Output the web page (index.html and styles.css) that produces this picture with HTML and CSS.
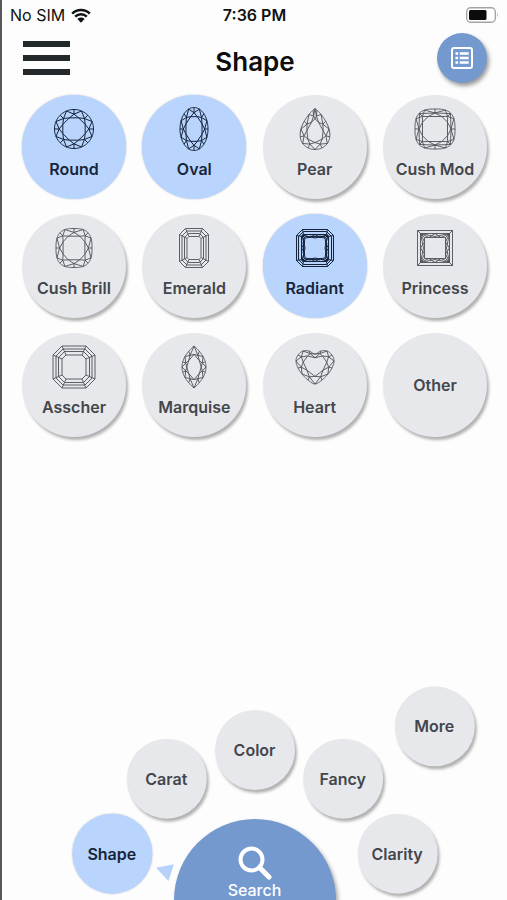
FILE: index.html
```html
<!DOCTYPE html>
<html lang="en">
<head>
<meta charset="utf-8">
<meta name="viewport" content="width=device-width, initial-scale=1">
<title>Shape</title>
<link rel="stylesheet" href="styles.css">
</head>
<body>
<div class="screen">
  <div class="status">
    <div class="status-left">
      <span>No SIM</span>
      <svg class="wifi" viewBox="0 0 20 15" aria-hidden="true">
        <path d="M1.2 5.6a12.6 12.6 0 0 1 17.6 0M4.2 8.7a8.3 8.3 0 0 1 11.6 0" fill="none" stroke="#111" stroke-width="2.5"/>
        <path d="M6.4 11.1a5.1 5.1 0 0 1 7.2 0L10 14.8z" fill="#111"/>
      </svg>
    </div>
    <span class="time">7:36 PM</span>
    <svg class="battery" viewBox="0 0 33 16" aria-hidden="true">
      <rect x=".7" y=".7" width="28.6" height="14.6" rx="4" fill="#fff" stroke="#a4a4a4" stroke-width="1.4"/>
      <rect x="3" y="3" width="17.5" height="10" rx="1.5" fill="#0c0c0c"/>
      <path d="M31 5.5q1.6 2.5 0 5z" fill="#a4a4a4"/>
    </svg>
  </div>

  <header class="header">
    <button class="burger" aria-label="Menu"><i></i><i></i><i></i></button>
    <h1 class="title">Shape</h1>
    <button class="list-button" aria-label="Results list">
      <svg viewBox="0 0 22 22" aria-hidden="true">
        <rect x="1" y="1" width="20" height="20" rx="2" fill="none" stroke="#fff" stroke-width="2"/>
        <path d="M4.5 6.5h2.6M4.5 11h2.6M4.5 15.5h2.6M8.7 6.5h9M8.7 11h9M8.7 15.5h9" stroke="#fff" stroke-width="2.4"/>
      </svg>
    </button>
  </header>

  <main class="shapes">
    <button class="shape selected" aria-pressed="true"><svg class="gem" data-cut="round"></svg><span>Round</span></button>
    <button class="shape selected" aria-pressed="true"><svg class="gem" data-cut="oval"></svg><span>Oval</span></button>
    <button class="shape" aria-pressed="false"><svg class="gem" data-cut="pear"></svg><span>Pear</span></button>
    <button class="shape" aria-pressed="false"><svg class="gem" data-cut="cushionModified"></svg><span>Cush Mod</span></button>
    <button class="shape" aria-pressed="false"><svg class="gem" data-cut="cushion"></svg><span>Cush Brill</span></button>
    <button class="shape" aria-pressed="false"><svg class="gem" data-cut="emerald"></svg><span>Emerald</span></button>
    <button class="shape selected" aria-pressed="true"><svg class="gem" data-cut="radiant"></svg><span>Radiant</span></button>
    <button class="shape" aria-pressed="false"><svg class="gem" data-cut="princess"></svg><span>Princess</span></button>
    <button class="shape" aria-pressed="false"><svg class="gem" data-cut="asscher"></svg><span>Asscher</span></button>
    <button class="shape" aria-pressed="false"><svg class="gem" data-cut="marquise"></svg><span>Marquise</span></button>
    <button class="shape" aria-pressed="false"><svg class="gem" data-cut="heart"></svg><span>Heart</span></button>
    <button class="shape plain" aria-pressed="false"><span>Other</span></button>
  </main>

  <nav class="dial" aria-label="Search criteria">
    <button class="spoke at-shape selected">Shape</button>
    <button class="spoke at-carat">Carat</button>
    <button class="spoke at-color">Color</button>
    <button class="spoke at-fancy">Fancy</button>
    <button class="spoke at-clarity">Clarity</button>
    <button class="spoke at-more">More</button>
    <svg class="pointer" viewBox="0 0 18 16" aria-hidden="true"><path d="M0 16h18L9 0z" fill="#b6d2fb"/></svg>
    <button class="search">
      <svg viewBox="0 0 34 34" aria-hidden="true">
        <circle cx="13.5" cy="13.5" r="11" fill="none" stroke="#fff" stroke-width="4"/>
        <path d="M21.5 21.5l9.5 9.5" stroke="#fff" stroke-width="5" stroke-linecap="round"/>
      </svg>
      <span>Search</span>
    </button>
  </nav>
</div>
<script src="gems.js"></script>
</body>
</html>
```
FILE: styles.css
```css
* {
  box-sizing: border-box;
}

body {
  margin: 0;
  background: #fdfdfd;
  font-family: Inter, "Liberation Sans", sans-serif;
  font-size: 16px;
  line-height: 20px;
  color: #43464b;
}

button {
  margin: 0;
  padding: 0;
  border: 0;
  background: none;
  font: inherit;
  font-weight: 600;
  color: inherit;
  cursor: pointer;
}

.screen {
  display: flex;
  flex-direction: column;
  min-height: 100vh;
  border-left: 2px solid #58585a;
}

.status,
.header {
  display: grid;
  grid-template-columns: 1fr auto 1fr;
  align-items: center;
}

.status {
  height: 30px;
  padding: 0 8px;
  color: #111;
}

.status-left {
  display: flex;
  align-items: center;
  gap: 6px;
}

.wifi {
  width: 20px;
  height: 15px;
}

.time {
  font-weight: 600;
}

.battery {
  width: 33px;
  height: 16px;
  justify-self: end;
}

.header {
  padding: 3px 20px 12px 21px;
}

.burger {
  display: flex;
  flex-direction: column;
  gap: 8px;
  width: 47px;
}

.burger i {
  height: 6px;
  background: #23282b;
}

.title {
  margin: 0;
  padding-top: 8px;
  font-size: 26px;
  line-height: 32px;
  font-weight: 600;
  color: #0d0d0d;
}

.list-button {
  display: grid;
  place-items: center;
  justify-self: end;
  width: 50px;
  height: 50px;
  border-radius: 50%;
  background: #7499cf;
  box-shadow: 2px 3px 4px rgba(0, 0, 0, .4);
}

.list-button svg {
  width: 22px;
  height: 22px;
}

.shapes {
  display: grid;
  grid-template-columns: repeat(4, 104px);
  justify-content: space-between;
  row-gap: 15px;
  padding: 0 20px;
}

.shape {
  display: flex;
  flex-direction: column;
  align-items: center;
  gap: 8px;
  height: 104px;
  padding-top: 12px;
  white-space: nowrap;
}

.plain {
  justify-content: center;
  padding-top: 0;
}

.shape,
.spoke {
  border-radius: 50%;
  background: #e7e8eb;
  box-shadow: 2px 3px 3px rgba(0, 0, 0, .3);
}

.selected {
  background: #b9d5fe;
  box-shadow: 0 0 2px #b4bccb;
  color: #17253a;
}

.gem {
  width: 44px;
  height: 44px;
  fill: none;
  stroke: #4c5057;
  stroke-width: .9;
}

.selected .gem {
  stroke: #14223a;
  stroke-width: 1;
}

.dial {
  display: grid;
  grid-template: 220px / 1fr;
  justify-items: center;
  align-items: end;
  margin-top: auto;
  overflow: hidden;
}

.dial > * {
  grid-area: 1 / 1;
}

/* Every spoke is centred on the hub and then moved out along its angle. */
.spoke {
  --reach: 150px;
  width: 80px;
  height: 80px;
  margin-bottom: -40px;
  transform: rotate(var(--angle)) translateY(calc(-1 * var(--reach))) rotate(calc(-1 * var(--angle)));
}

.at-shape { --angle: -72deg; }
.at-carat { --angle: -36deg; }
.at-color { --angle: 0deg; }
.at-fancy { --angle: 36deg; }
.at-clarity { --angle: 72deg; }
.at-more { --angle: 46deg; --reach: 250px; }

.pointer {
  width: 18px;
  height: 16px;
  margin-bottom: -8px;
  transform: rotate(-72deg) translateY(-96px);
}

.search {
  display: flex;
  flex-direction: column;
  align-items: center;
  width: 162px;
  height: 162px;
  margin-bottom: -81px;
  padding-top: 27px;
  border-radius: 50%;
  background: #7499cf;
  box-shadow: 2px 3px 4px rgba(0, 0, 0, .35);
  color: #fff;
  font-weight: 500;
}

.search svg {
  width: 34px;
  height: 34px;
}
```
FILE: gems.js
```js
const TAU = Math.PI * 2;
const power = (v, p) => Math.sign(v) * Math.abs(v) ** p;

/* Outlines: turn (0..1, clockwise from the top) to a point. */
const rounded = (w, h, p) => t => [
  w * power(Math.sin(t * TAU), 2 / p),
  -h * power(Math.cos(t * TAU), 2 / p)
];

const marquise = (w, h) => t => {
  const u = ((t % 1) + 1) % 1;
  const right = u < 0.5;
  const y = right ? 4 * u - 1 : 3 - 4 * u;
  return [(right ? w : -w) * (1 - y * y), h * y];
};

const pear = (w, h) => t => [
  w * Math.sin(t * TAU) * Math.abs(Math.sin(t * TAU / 2)) ** 0.8 / 0.81,
  -h * Math.cos(t * TAU)
];

const heartSide = [[0, -13], [6, -16], [12, -16], [17, -12], [19, -6], [17, 1], [13, 7], [7, 13], [0, 17]];
const heart = t => {
  const u = ((t % 1) + 1) % 1 * 16;
  const at = i => {
    const k = (i + 16) % 16;
    return k <= 8 ? heartSide[k] : [-heartSide[16 - k][0], heartSide[16 - k][1]];
  };
  const i = Math.floor(u), f = u - i;
  return [0, 1].map(c => {
    const [a, b, d, e] = [at(i - 1)[c], at(i)[c], at(i + 1)[c], at(i + 2)[c]];
    return b + f * (d - a + f * (2 * a - 5 * b + 4 * d - e + f * (3 * (b - d) + e - a))) / 2;
  });
};

const line = (points, close) => 'M' + points.map(p => p.map(v => v.toFixed(2)).join(' ')).join('L') + (close ? 'Z' : '');

/* Girdle, kites, stars and table of a brilliant cut. */
function brilliant(outline, { n = 8, table = 0.6, star = 0.78, shift = 0.5, cy = 0 } = {}) {
  const at = (t, s) => {
    const [x, y] = outline(t);
    return [x * s, cy + (y - cy) * s];
  };
  let d = line(Array.from({ length: 128 }, (_, i) => at(i / 128, 1)), true);
  const top = [];
  for (let k = 0; k < n; k++) {
    const t = (k + shift) / n, half = 0.5 / n;
    top.push(at(t, table));
    d += line([at(t, 1), at(t + half, star), at(t, table), at(t - half, star), at(t, 1)]);
    d += line([at(t + half, star), at(t + half, 1)]);
  }
  return d + line(top, true);
}

const octagon = (w, h, c) => [[-w + c, -h], [w - c, -h], [w, -h + c], [w, h - c], [w - c, h], [-w + c, h], [-w, h - c], [-w, -h + c]];

/* Nested octagons joined at their corners. */
function steps(rings) {
  const shapes = rings.map(r => octagon(...r));
  return shapes.map(s => line(s, true)).join('') +
    shapes[0].map((p, i) => line([p, shapes[shapes.length - 1][i]])).join('');
}

/* Repeats a set of lines on the four sides. */
function fourSides(lines) {
  let d = '';
  for (let q = 0; q < 4; q++) {
    for (const l of lines) {
      d += line(l.map(([x, y]) => [[x, y], [-y, x], [-x, -y], [y, -x]][q]));
    }
  }
  return d;
}

const cuts = {
  round: brilliant(rounded(19.5, 19.5, 2), { table: 0.62, star: 0.76 }),
  oval: brilliant(rounded(14, 21.5, 2), { table: 0.62, star: 0.76 }),
  pear: brilliant(pear(15, 20.5), { cy: 4, shift: 0, table: 0.58, star: 0.74 }),
  cushionModified: brilliant(rounded(20, 20, 2.9), { table: 0.66, star: 0.8 }) +
    fourSides([[[-15.5, -15.5], [0, -16], [15.5, -15.5]]]),
  cushion: brilliant(rounded(18, 19.5, 2.8), { table: 0.64, star: 0.8 }),
  emerald: steps([[14.5, 19.5, 6], [12, 17, 5], [9.5, 14.5, 4], [7, 11.5, 2]]),
  asscher: steps([[21, 21, 9], [18, 18, 7], [15.5, 15.5, 6], [12, 12, 4]]),
  radiant: steps([[18.5, 18.5, 6], [16.5, 16.5, 5], [13.5, 13.5, 2]]) +
    fourSides([
      [[-13, -13], [-10, -10], [0, -11.5], [10, -10]],
      [[-13, -13], [0, -10], [13, -13]],
      [[-13, -13], [-5, -10.5], [0, -13.5], [5, -10.5], [13, -13]],
      [[-11, -10], [-12, -5], [-11, 0], [-12, 5]]
    ]),
  princess: fourSides([
    [[-17.5, -17.5], [17.5, -17.5]],
    [[-14.5, -14.5], [14.5, -14.5]],
    [[-17.5, -17.5], [-10.5, -10.5], [10.5, -10.5]],
    [[-14.5, -14.5], [0, -11.5], [14.5, -14.5]],
    [[-14.5, -14.5], [-6, -10.5], [0, -14.5], [6, -10.5], [14.5, -14.5]]
  ]),
  marquise: brilliant(marquise(12, 21), { shift: 0, table: 0.6, star: 0.74 }),
  heart: brilliant(heart, { shift: 0, table: 0.62, star: 0.8, cy: -3 })
};

for (const svg of document.querySelectorAll('.gem')) {
  svg.setAttribute('viewBox', '-22 -22 44 44');
  svg.setAttribute('aria-hidden', 'true');
  const path = document.createElementNS('http://www.w3.org/2000/svg', 'path');
  path.setAttribute('d', cuts[svg.dataset.cut]);
  svg.append(path);
}
```
